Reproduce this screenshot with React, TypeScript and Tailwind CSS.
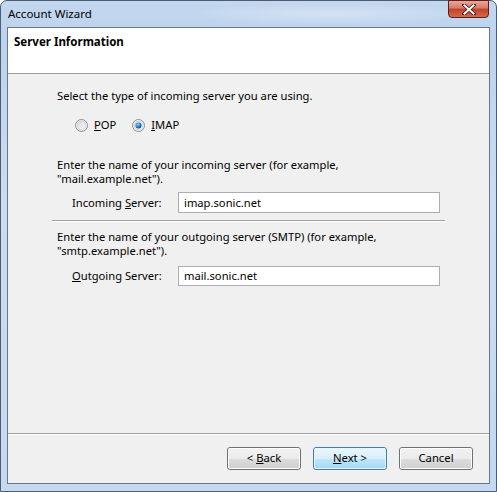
import React from "react";

const font = { fontFamily: '"Noto Sans", "Segoe UI", sans-serif' };

function Radio({ checked }: { checked?: boolean }) {
  return (
    <svg width="13" height="13" viewBox="0 0 13 13" className="shrink-0">
      <defs>
        <linearGradient id={checked ? "rgc" : "rgu"} x1="0" y1="0" x2="1" y2="1">
          <stop offset="0" stopColor="#d8d8d8" />
          <stop offset="1" stopColor="#f8f8f8" />
        </linearGradient>
        <radialGradient id="dot" cx="0.4" cy="0.35" r="0.7">
          <stop offset="0" stopColor="#8ad4ff" />
          <stop offset="0.5" stopColor="#2a8ad4" />
          <stop offset="1" stopColor="#0b3d73" />
        </radialGradient>
      </defs>
      <circle cx="6.5" cy="6.5" r="6" fill="#f4f4f4" stroke="#8e8f8f" strokeWidth="1" />
      <circle cx="6.5" cy="6.5" r="4.5" fill={`url(#${checked ? "rgc" : "rgu"})`} stroke="#c8c8c8" strokeWidth="0.6" />
      {checked && <circle cx="6.5" cy="6.5" r="3" fill="url(#dot)" />}
    </svg>
  );
}

function Btn({ children, def }: { children: React.ReactNode; def?: boolean }) {
  return (
    <div
      className={
        "w-[74px] h-[23px] rounded-[3px] border flex items-center justify-center text-[11.3px] text-black " +
        (def
          ? "border-[#3c7fb1] bg-[linear-gradient(#eaf6fd_0%,#d9f0fc_50%,#bee6fd_50%,#a7d9f5_100%)]"
          : "border-[#707070] bg-[linear-gradient(#f2f2f2_0%,#ebebeb_50%,#dddddd_50%,#cfcfcf_100%)]")
      }
    >
      <div className={"w-full h-full rounded-[2px] border flex items-center justify-center " + (def ? "border-[#e6f6ff]" : "border-[#fcfcfc]")}>
        {children}
      </div>
    </div>
  );
}

export default function App() {
  return (
    <div style={font} className="w-[497px] h-[492px] bg-white relative overflow-hidden">
      <div className="absolute inset-0 rounded-t-[7px] border border-[#4c5d73] bg-[linear-gradient(180deg,#c3d7ee_0%,#bcd3ee_8%,#c9dcf2_40%,#c4d9f1_100%)] flex flex-col">
        {/* title bar */}
        <div className="h-[26px] flex items-start relative shrink-0">
          <div className="absolute left-[180px] top-[2px] w-[300px] h-[22px] bg-[radial-gradient(ellipse_at_center,#dce8f5_0%,transparent_70%)] opacity-70" />
          <span className="ml-[7px] mt-[5px] text-[11.5px] text-black relative leading-[16px]">Account Wizard</span>
          <div className="absolute right-[7px] top-[-1px] w-[41px] h-[18px] rounded-b-[4px] border border-[#5a2018] bg-[linear-gradient(#e8a79a_0%,#d77a66_45%,#c0412a_50%,#d5694d_100%)] flex items-center justify-center">
            <svg width="14" height="11" viewBox="0 0 14 11">
              <path d="M2 1 L12 10 M12 1 L2 10" stroke="#3a1410" strokeWidth="3.6" strokeLinecap="square" />
              <path d="M2.5 1.5 L11.5 9.5 M11.5 1.5 L2.5 9.5" stroke="#ffffff" strokeWidth="2" strokeLinecap="square" />
            </svg>
          </div>
        </div>
        {/* client */}
        <div className="mx-[6px] mb-[7px] flex-1 border border-[#6d7783] bg-[#f0f0f0] flex flex-col">
          <div className="h-[46px] bg-white border-b border-[#a0a0a0] px-[6px] pt-[6px] shrink-0">
            <div className="text-[11.5px] font-bold text-black leading-[16px]">Server Information</div>
          </div>
          <div className="flex-1 flex flex-col pl-[44px] pr-[49px] text-[11.2px] text-black leading-[14px]">
            <div className="mt-[15px] pl-[5px]">Select the type of incoming server you are using.</div>
            <div className="mt-[15px] flex items-center pl-[23px] h-[14px]">
              <Radio />
              <span className="ml-[6px]"><u>P</u>OP</span>
              <span className="ml-[16px] flex items-center">
                <Radio checked />
                <span className="ml-[6px]"><u>I</u>MAP</span>
              </span>
            </div>
            <div className="mt-[26px] pl-[5px]">
              Enter the name of your incoming server (for example,
              <br />
              "mail.example.net").
            </div>
            <div className="mt-[6px] flex items-center h-[21px] pl-[20px]">
              <span className="w-[106px]">Incoming <u>S</u>erver:</span>
              <div className="flex-1 h-[21px] bg-white border border-[#abadb3] flex items-center pl-[5px]">imap.sonic.net</div>
            </div>
            <div className="mt-[7px] mr-[-5px] h-[2px] border-t border-[#a0a0a0] border-b border-b-white" />
            <div className="mt-[8px] pl-[5px]">
              Enter the name of your outgoing server (SMTP) (for example,
              <br />
              "smtp.example.net").
            </div>
            <div className="mt-[8px] flex items-center h-[20px] pl-[20px]">
              <span className="w-[106px]"><u>O</u>utgoing Server:</span>
              <div className="flex-1 h-[20px] bg-white border border-[#abadb3] flex items-center pl-[5px]">mail.sonic.net</div>
            </div>
          </div>
          <div className="h-[2px] border-t border-[#a0a0a0] border-b border-b-white shrink-0" />
          <div className="h-[48px] flex items-start justify-end gap-[12px] pr-[16px] pt-[12px] shrink-0">
            <Btn>&lt; <u className="ml-[3px]">B</u>ack</Btn>
            <Btn def><u>N</u>ext &gt;</Btn>
            <Btn>Cancel</Btn>
          </div>
        </div>
      </div>
    </div>
  );
}
